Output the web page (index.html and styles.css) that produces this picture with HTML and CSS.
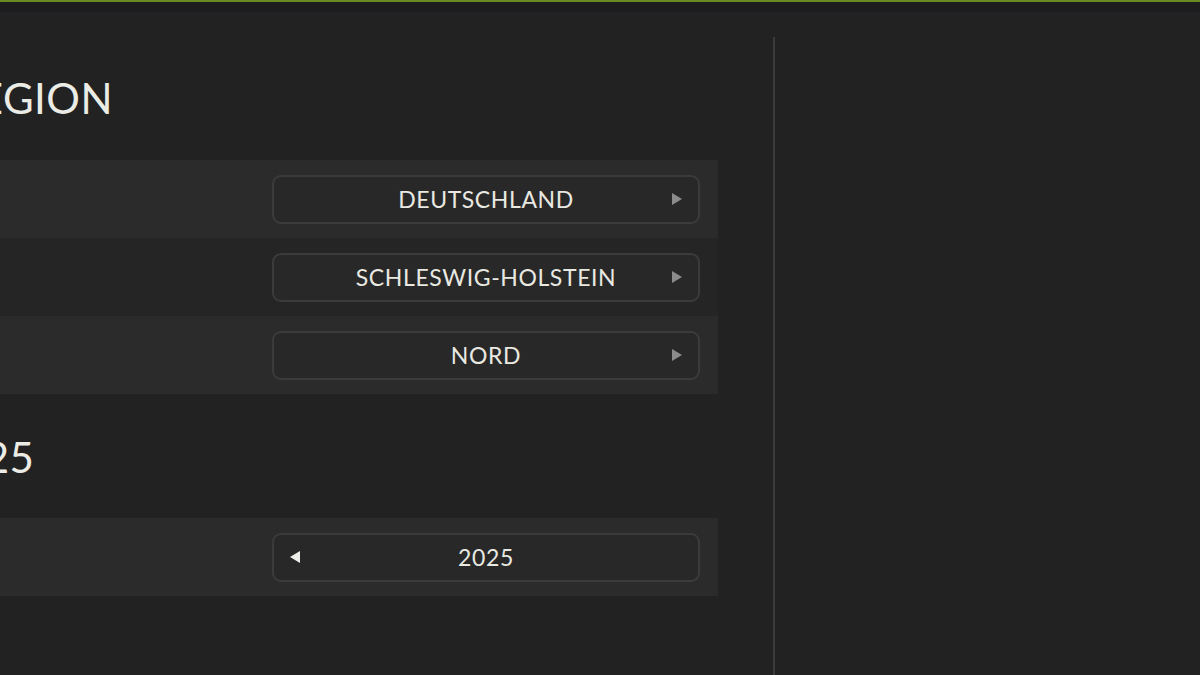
FILE: index.html
```html
<!DOCTYPE html>
<html lang="de">
<head>
<meta charset="utf-8">
<title>Region</title>
<link rel="stylesheet" href="styles.css">
</head>
<body>
<div class="topbar"></div>
<div class="layout">
  <section class="settings">
    <h2 class="section-title">REGION</h2>
    <div class="rows">
      <div class="row">
        <span class="row-label">Land</span>
        <button class="select">
          <span class="select-value">DEUTSCHLAND</span>
          <span class="arrow arrow-right"></span>
        </button>
      </div>
      <div class="row row-alt">
        <span class="row-label">Bundesland</span>
        <button class="select">
          <span class="select-value">SCHLESWIG-HOLSTEIN</span>
          <span class="arrow arrow-right"></span>
        </button>
      </div>
      <div class="row">
        <span class="row-label">Gebiet</span>
        <button class="select">
          <span class="select-value">NORD</span>
          <span class="arrow arrow-right"></span>
        </button>
      </div>
    </div>
    <h2 class="section-title section-title-year">2025</h2>
    <div class="rows">
      <div class="row">
        <span class="row-label">Jahr</span>
        <button class="select">
          <span class="arrow arrow-left"></span>
          <span class="select-value">2025</span>
        </button>
      </div>
    </div>
  </section>
  <div class="divider"></div>
  <aside class="preview"></aside>
</div>
</body>
</html>
```

FILE: styles.css
```css
html, body {
  margin: 0;
  padding: 0;
  height: 100%;
}
body {
  background: #222222;
  color: #e9e9e2;
  font-family: "Lato", "Noto Sans", sans-serif;
  overflow: hidden;
}
.topbar {
  height: 10px;
  border-top: 2px solid #6a8a22;
  background: #1d1d20;
}
.layout {
  display: flex;
  height: calc(100% - 12px);
}
.settings {
  width: 818px;
  margin-left: -100px;
  flex-shrink: 0;
  padding-top: 64px;
}
.section-title {
  margin: 0 0 40px 0;
  padding-left: 52px;
  font-size: 42px;
  line-height: 44px;
  font-weight: 400;
  letter-spacing: 0.5px;
  color: #ecece6;
}
.section-title-year {
  margin-top: 41px;
  margin-bottom: 39px;
  padding-left: 35px;
}
.rows {
  display: flex;
  flex-direction: column;
}
.row {
  height: 78px;
  display: flex;
  align-items: center;
  justify-content: space-between;
  background: #2b2b2b;
  padding-right: 18px;
  box-sizing: border-box;
}
.row-alt {
  background: #252525;
}
.row-label {
  visibility: hidden;
}
.select {
  position: relative;
  width: 428px;
  height: 49px;
  box-sizing: border-box;
  border: 2px solid #3b3b3b;
  border-radius: 9px;
  background: #282828;
  color: #e9e9e2;
  font-family: inherit;
  font-size: 23px;
  letter-spacing: 0.6px;
  display: flex;
  align-items: center;
  justify-content: center;
  padding: 0;
}
.arrow {
  position: absolute;
  top: 50%;
  width: 0;
  height: 0;
  border-top: 6px solid transparent;
  border-bottom: 6px solid transparent;
  transform: translateY(-50%);
}
.arrow-right {
  right: 16px;
  border-left: 10px solid #8c8c8c;
}
.arrow-left {
  left: 16px;
  border-right: 10px solid #eeeeea;
}
.divider {
  width: 2px;
  margin-left: 55px;
  margin-top: 25px;
  background: #3b3b3b;
}
.preview {
  flex: 1;
}
```
